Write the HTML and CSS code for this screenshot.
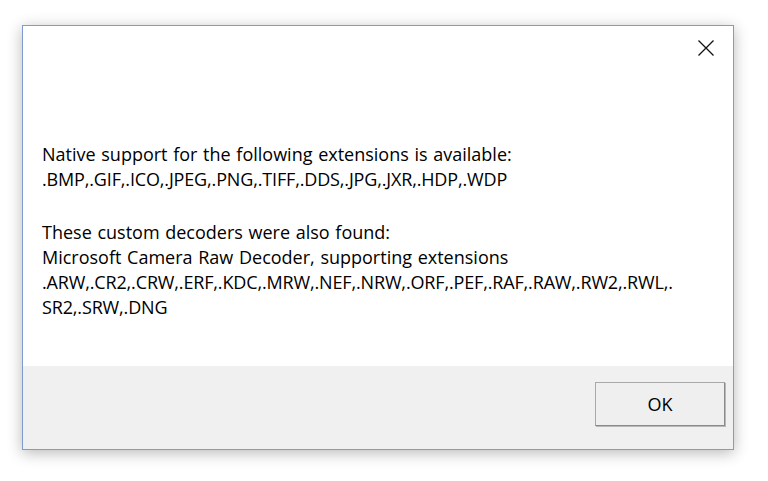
FILE: index.html
```html
<!DOCTYPE html>
<html>
<head>
<meta charset="utf-8">
<link rel="stylesheet" href="styles.css">
</head>
<body>
<div class="dialog">
  <div class="content">
    <div class="titlebar">
      <div class="close" aria-label="Close">
        <svg width="16" height="16" viewBox="0 0 16 16"><path d="M0.5 0.5 L15.5 15.5 M15.5 0.5 L0.5 15.5" stroke="#111" stroke-width="1.3" fill="none"/></svg>
      </div>
    </div>
    <div class="message">
      <p class="para">Native support for the following extensions is available:<br><span class="ext">.BMP,.GIF,.ICO,.JPEG,.PNG,.TIFF,.DDS,.JPG,.JXR,.HDP,.WDP</span></p>
      <p class="para second">These custom decoders were also found:<br>Microsoft Camera Raw Decoder, supporting extensions<br><span class="ext">.ARW,.CR2,.CRW,.ERF,.KDC,.MRW,.NEF,.NRW,.ORF,.PEF,.RAF,.RAW,.RW2,.RWL,.<br>SR2,.SRW,.DNG</span></p>
    </div>
  </div>
  <div class="footer">
    <button class="ok">OK</button>
  </div>
</div>
</body>
</html>
```
FILE: styles.css
```css
html, body {
  margin: 0;
  padding: 0;
  background: #ffffff;
}
body {
  width: 768px;
  height: 481px;
  overflow: hidden;
  font-family: "Open Sans", "Noto Sans", sans-serif;
}
.dialog {
  margin: 25px 0 0 22px;
  width: 710px;
  height: 423px;
  border: 1px solid #7f9ccc;
  background: #ffffff;
  box-shadow: 0 3px 14px rgba(0, 0, 0, 0.28);
  display: flex;
  flex-direction: column;
}
.content {
  flex: 1;
  display: flex;
  flex-direction: column;
}
.titlebar {
  height: 50px;
  display: flex;
  justify-content: flex-end;
}
.close {
  width: 16px;
  height: 16px;
  margin: 14px 19px 0 0;
}
.close svg {
  display: block;
}
.message {
  padding: 66px 0 0 19px;
  font-size: 18px;
  line-height: 25px;
  word-spacing: 1px;
  color: #000;
}
.para {
  margin: 0;
}
.para.second {
  margin-top: 28px;
}
.ext {
  letter-spacing: -0.15px;
}
.footer {
  height: 83px;
  background: #f0f0f0;
  display: flex;
  justify-content: flex-end;
  align-items: flex-start;
  padding: 16px 8px 0 0;
  box-sizing: border-box;
}
.ok {
  width: 130px;
  height: 44px;
  background: #efefef;
  border: 1px solid #a9a9a9;
  border-right-color: #8a8a8a;
  border-bottom-color: #8a8a8a;
  box-shadow: 1px 1px 0 #b8b8b8;
  font-family: "Open Sans", "Noto Sans", sans-serif;
  font-size: 18px;
  color: #000;
  padding: 0;
}
```
